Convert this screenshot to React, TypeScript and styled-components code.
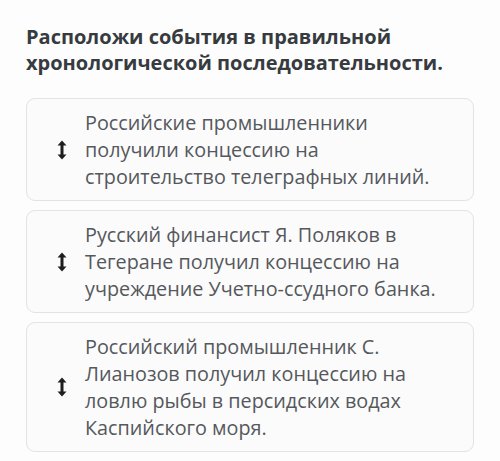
import React from "react";
import styled, { createGlobalStyle } from "styled-components";

const GlobalStyle = createGlobalStyle`
  body {
    margin: 0;
    background-color: #fdfdfd;
    font-family: "Open Sans", "Noto Sans", sans-serif;
  }
`;

const Page = styled.div`
  width: 500px;
  height: 461px;
  padding: 24px 26px 0 26px;
  box-sizing: border-box;
  display: flex;
  flex-direction: column;
`;

const Title = styled.h2`
  margin: 0 0 22px 0;
  font-size: 20px;
  line-height: 26px;
  font-weight: 700;
  color: #373b40;
`;

const List = styled.div`
  display: flex;
  flex-direction: column;
  gap: 9px;
`;

const Card = styled.div`
  display: flex;
  align-items: center;
  background-color: #fbfbfb;
  border: 1px solid #e3e3e3;
  border-radius: 9px;
  padding: 10px 16px 10px 0;
`;

const Handle = styled.div`
  width: 58px;
  flex-shrink: 0;
  display: flex;
  justify-content: center;
  padding-left: 11px;
  box-sizing: border-box;
`;

const CardText = styled.p`
  margin: 0;
  font-size: 19.8px;
  line-height: 27px;
  color: #55585c;
`;

const MoveIcon = () => (
  <svg width="10" height="20" viewBox="0 0 10 20">
    <path d="M5 0.5 L9.5 5.5 L0.5 5.5 Z" fill="#1e1e1e" />
    <path d="M5 19.5 L9.5 14.5 L0.5 14.5 Z" fill="#1e1e1e" />
    <rect x="3.5" y="4.5" width="3" height="11" fill="#1e1e1e" />
  </svg>
);

const events = [
  {
    id: 1,
    lines: [
      "Российские промышленники",
      "получили концессию на",
      "строительство телеграфных линий.",
    ],
  },
  {
    id: 2,
    lines: [
      "Русский финансист Я. Поляков в",
      "Тегеране получил концессию на",
      "учреждение Учетно-ссудного банка.",
    ],
  },
  {
    id: 3,
    lines: [
      "Российский промышленник С.",
      "Лианозов получил концессию на",
      "ловлю рыбы в персидских водах",
      "Каспийского моря.",
    ],
  },
];

const App = () => {
  return (
    <>
      <GlobalStyle />
      <Page>
        <Title>
          Расположи события в правильной
          <br />
          хронологической последовательности.
        </Title>
        <List>
          {events.map((ev) => (
            <Card key={ev.id}>
              <Handle>
                <MoveIcon />
              </Handle>
              <CardText>
                {ev.lines.map((line, i) => (
                  <React.Fragment key={i}>
                    {line}
                    {i < ev.lines.length - 1 && <br />}
                  </React.Fragment>
                ))}
              </CardText>
            </Card>
          ))}
        </List>
      </Page>
    </>
  );
};

export default App;
